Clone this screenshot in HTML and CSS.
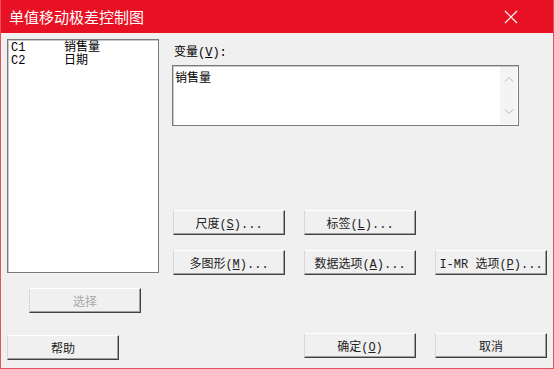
FILE: index.html
```html
<!DOCTYPE html>
<html>
<head>
    <title>单值移动极差控制图</title>
    <link rel="stylesheet" href="styles.css">
</head>
<body>
<div class="dialog">
    <div class="titlebar">
        <span class="title">单值移动极差控制图</span>
        <svg class="close" width="14" height="14" viewBox="0 0 14 14"><path d="M1 1L13 13M13 1L1 13" stroke="#fff" stroke-width="1.2" fill="none"/></svg>
    </div>
    <div class="content">
        <div class="left">
            <div class="list">
                <span>C1</span><span>销售量</span>
                <span>C2</span><span>日期</span>
            </div>
            <button class="btn select" disabled>选择</button>
            <button class="btn help">帮助</button>
        </div>
        <div class="right">
            <div class="label">变量(<u>V</u>):</div>
            <div class="textbox">
                <div class="text">销售量</div>
                <div class="scroll">
                    <svg width="10" height="6" viewBox="0 0 10 6"><path d="M1 5.5L5 1.5L9 5.5" stroke="#b8b8b8" fill="none"/></svg>
                    <svg width="10" height="6" viewBox="0 0 10 6"><path d="M1 0.5L5 4.5L9 0.5" stroke="#b8b8b8" fill="none"/></svg>
                </div>
            </div>
            <div class="grid">
                <button class="btn">尺度(<u>S</u>)...</button>
                <button class="btn">标签(<u>L</u>)...</button>
                <span></span>
                <button class="btn">多图形(<u>M</u>)...</button>
                <button class="btn">数据选项(<u>A</u>)...</button>
                <button class="btn">I-MR 选项(<u>P</u>)...</button>
            </div>
            <div class="grid bottom">
                <span></span>
                <button class="btn">确定(<u>O</u>)</button>
                <button class="btn">取消</button>
            </div>
        </div>
    </div>
</div>
</body>
</html>
```

FILE: styles.css
```css
body { margin: 0; background: #f0f0f0; font-family: "Liberation Mono", "Noto Sans CJK SC", monospace; font-size: 12px; color: #000; }
.dialog { width: 554px; height: 369px; box-sizing: border-box; border: 1px solid #e8505c; border-top: none; background: #f0f0f0; }
.titlebar { height: 33px; background: #e81123; display: flex; align-items: center; justify-content: space-between; padding: 0 35px 0 8px; }
.title { color: #fff; font-family: "Noto Sans CJK SC", sans-serif; font-size: 15px; }
.close { margin-top: 1px; }
.content { display: flex; padding: 6px 0 0 6px; }
.left { width: 152px; display: flex; flex-direction: column; }
.list { height: 234px; box-sizing: border-box; background: #fff; border: 1px solid #7a7a7a; box-shadow: inset 1px 1px #c8c8c8; display: grid; grid-template-columns: 53px 1fr; align-content: start; padding: 2px 0 0 3px; line-height: 13px; }
.right { margin-left: 13px; width: 377px; }
.label { height: 21px; padding: 4px 0 0 2px; box-sizing: border-box; margin-top: 3px; line-height: 14px; }
.textbox { height: 61px; box-sizing: border-box; border: 1px solid #7a7a7a; box-shadow: inset 1px 1px #c8c8c8; background: #fff; display: flex; margin-top: 2px; width: 347px; }
.text { flex: 1; padding: 2px 0 0 2px; }
.scroll { width: 17px; margin: 1px 1px 1px 0; background: #f4f4f4; display: flex; flex-direction: column; justify-content: space-between; align-items: center; padding: 9px 0 9px; }
.grid { display: grid; grid-template-columns: repeat(3, 112px); column-gap: 19px; row-gap: 15px; margin-top: 84px; margin-left: 1px; }
.grid.bottom { margin-top: 58px; }
.btn { height: 25px; width: 112px; box-sizing: border-box; background: #f0f0f0; border: 1px solid; border-color: #fff #404040 #404040 #d8d8d8; box-shadow: inset -1px -1px #a0a0a0; font-family: "Liberation Mono", "Noto Sans CJK SC", monospace; font-size: 12px; color: #222; padding: 0; }
.btn.select { margin: 15px 0 0 22px; color: #a8a8a8; }
.btn.help { margin-top: 22px; }
```
